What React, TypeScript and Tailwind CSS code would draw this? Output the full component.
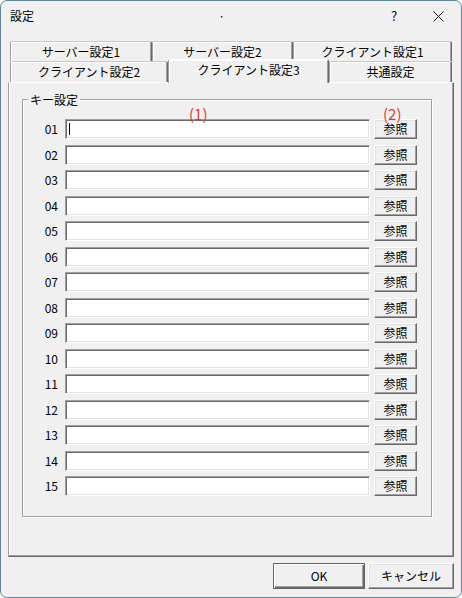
import React from 'react';

const font = { fontFamily: '"Noto Sans CJK JP", "Noto Sans", sans-serif' };

function Tab({ label, w, active }: { label: string; w: number; active?: boolean }) {
  if (active) {
    return (
      <div
        style={{ width: w }}
        className="relative z-10 -mt-[2px] -mb-px h-[24px] shrink-0 rounded-t-[2px] border-l border-t border-l-[#a0a0a0] border-t-white border-r border-r-[#696969] bg-[#f0f0f0] text-center text-[12px] leading-[20px] text-black shadow-[inset_-1px_0_0_#a0a0a0,inset_1px_1px_0_#ffffff]"
      >
        {label}
      </div>
    );
  }
  return (
    <div
      style={{ width: w }}
      className="h-full shrink-0 rounded-t-[2px] border-l border-t border-l-[#a0a0a0] border-t-[#c8c8c8] border-r border-r-[#696969] bg-[#f0f0f0] text-center text-[12px] leading-[19px] text-black shadow-[inset_-1px_0_0_#a0a0a0,inset_1px_1px_0_#ffffff]"
    >
      {label}
    </div>
  );
}

function KeyRow({ n }: { n: string }) {
  return (
    <div className="flex h-[20px] items-center">
      <div className="w-[36px] pr-[7px] text-right text-[12px] leading-none text-black">{n}</div>
      <div className="h-[20px] w-[305px] border border-t-[#a0a0a0] border-l-[#a0a0a0] border-r-white border-b-white bg-white shadow-[inset_1px_1px_0_#696969,inset_-1px_-1px_0_#e3e3e3]">
        {n === '01' && <div className="ml-[3px] mt-[3px] h-[12px] w-px bg-black" />}
      </div>
      <div className="ml-[4px] flex h-[20px] w-[43px] items-center justify-center border border-t-white border-l-white border-r-[#696969] border-b-[#696969] bg-[#f0f0f0] text-[12px] leading-none text-black shadow-[inset_-1px_-1px_0_#a0a0a0,inset_1px_1px_0_#e3e3e3]">
        参照
      </div>
    </div>
  );
}

export default function App() {
  const rows = ['01', '02', '03', '04', '05', '06', '07', '08', '09', '10', '11', '12', '13', '14', '15'];

  return (
    <div style={font} className="h-[598px] w-[462px] overflow-hidden rounded-[7px] border border-[#5f8797] bg-[#f0f0f0] text-black">
      {/* title bar */}
      <div className="flex h-[30px] items-center text-[12px]">
        <div className="pl-[9px]">設定</div>
        <div className="flex-1 pl-[30px] text-center text-[12px]">·</div>
        <div className="w-[30px] text-center text-[13px]">?</div>
        <div className="flex w-[52px] items-center justify-center">
          <svg width="11" height="11" viewBox="0 0 11 11" className="ml-[6px]">
            <path d="M0.5 0.5 L10.5 10.5 M10.5 0.5 L0.5 10.5" stroke="#1a1a1a" strokeWidth="1" />
          </svg>
        </div>
      </div>

      <div className="px-[7px] pt-[10px]">
        {/* tabs */}
        <div className="flex h-[20px] pl-[2px]">
          <Tab label="サーバー設定1" w={142} />
          <Tab label="サーバー設定2" w={141} />
          <Tab label="クライアント設定1" w={159} />
        </div>
        <div className="flex h-[21px] items-end pl-[2px]">
          <Tab label="クライアント設定2" w={158} />
          <Tab label="クライアント設定3" w={161} active />
          <Tab label="共通設定" w={123} />
        </div>

        {/* tab panel */}
        <div className="h-[475px] w-[446px] border border-t-white border-l-[#a0a0a0] border-r-[#696969] border-b-[#696969] shadow-[inset_-1px_-1px_0_#a0a0a0,inset_1px_0_0_#ffffff] pl-[13px] pt-[16px]">
          <div className="relative h-[418px] w-[410px] border border-[#a0a0a0] shadow-[inset_1px_1px_0_#ffffff,1px_1px_0_#ffffff]">
            <div className="absolute -top-[8px] left-[5px] bg-[#f0f0f0] px-[2px] text-[12px] leading-[16px]">キー設定</div>
            <div className="flex flex-col gap-[5.5px] pl-[6px] pt-[19px]">
              {rows.map((n) => (
                <KeyRow key={n} n={n} />
              ))}
            </div>
            <div className="absolute left-[166px] top-[6px] text-[15px] leading-none text-[#e03a3a]">(1)</div>
            <div className="absolute left-[360px] top-[6px] text-[15px] leading-none text-[#e03a3a]">(2)</div>
          </div>
        </div>

        {/* bottom buttons */}
        <div className="mt-[6px] flex justify-end gap-[3px]">
          <div className="flex h-[26px] w-[92px] items-center justify-center border border-[#646464] text-[12px] shadow-[inset_1px_1px_0_#ffffff,inset_-1px_-1px_0_#696969,inset_-2px_-2px_0_#a0a0a0]">
            OK
          </div>
          <div className="flex h-[26px] w-[86px] items-center justify-center border border-t-white border-l-white border-r-[#696969] border-b-[#696969] text-[12px] shadow-[inset_-1px_-1px_0_#a0a0a0,inset_1px_1px_0_#e3e3e3]">
            キャンセル
          </div>
        </div>
      </div>
    </div>
  );
}
